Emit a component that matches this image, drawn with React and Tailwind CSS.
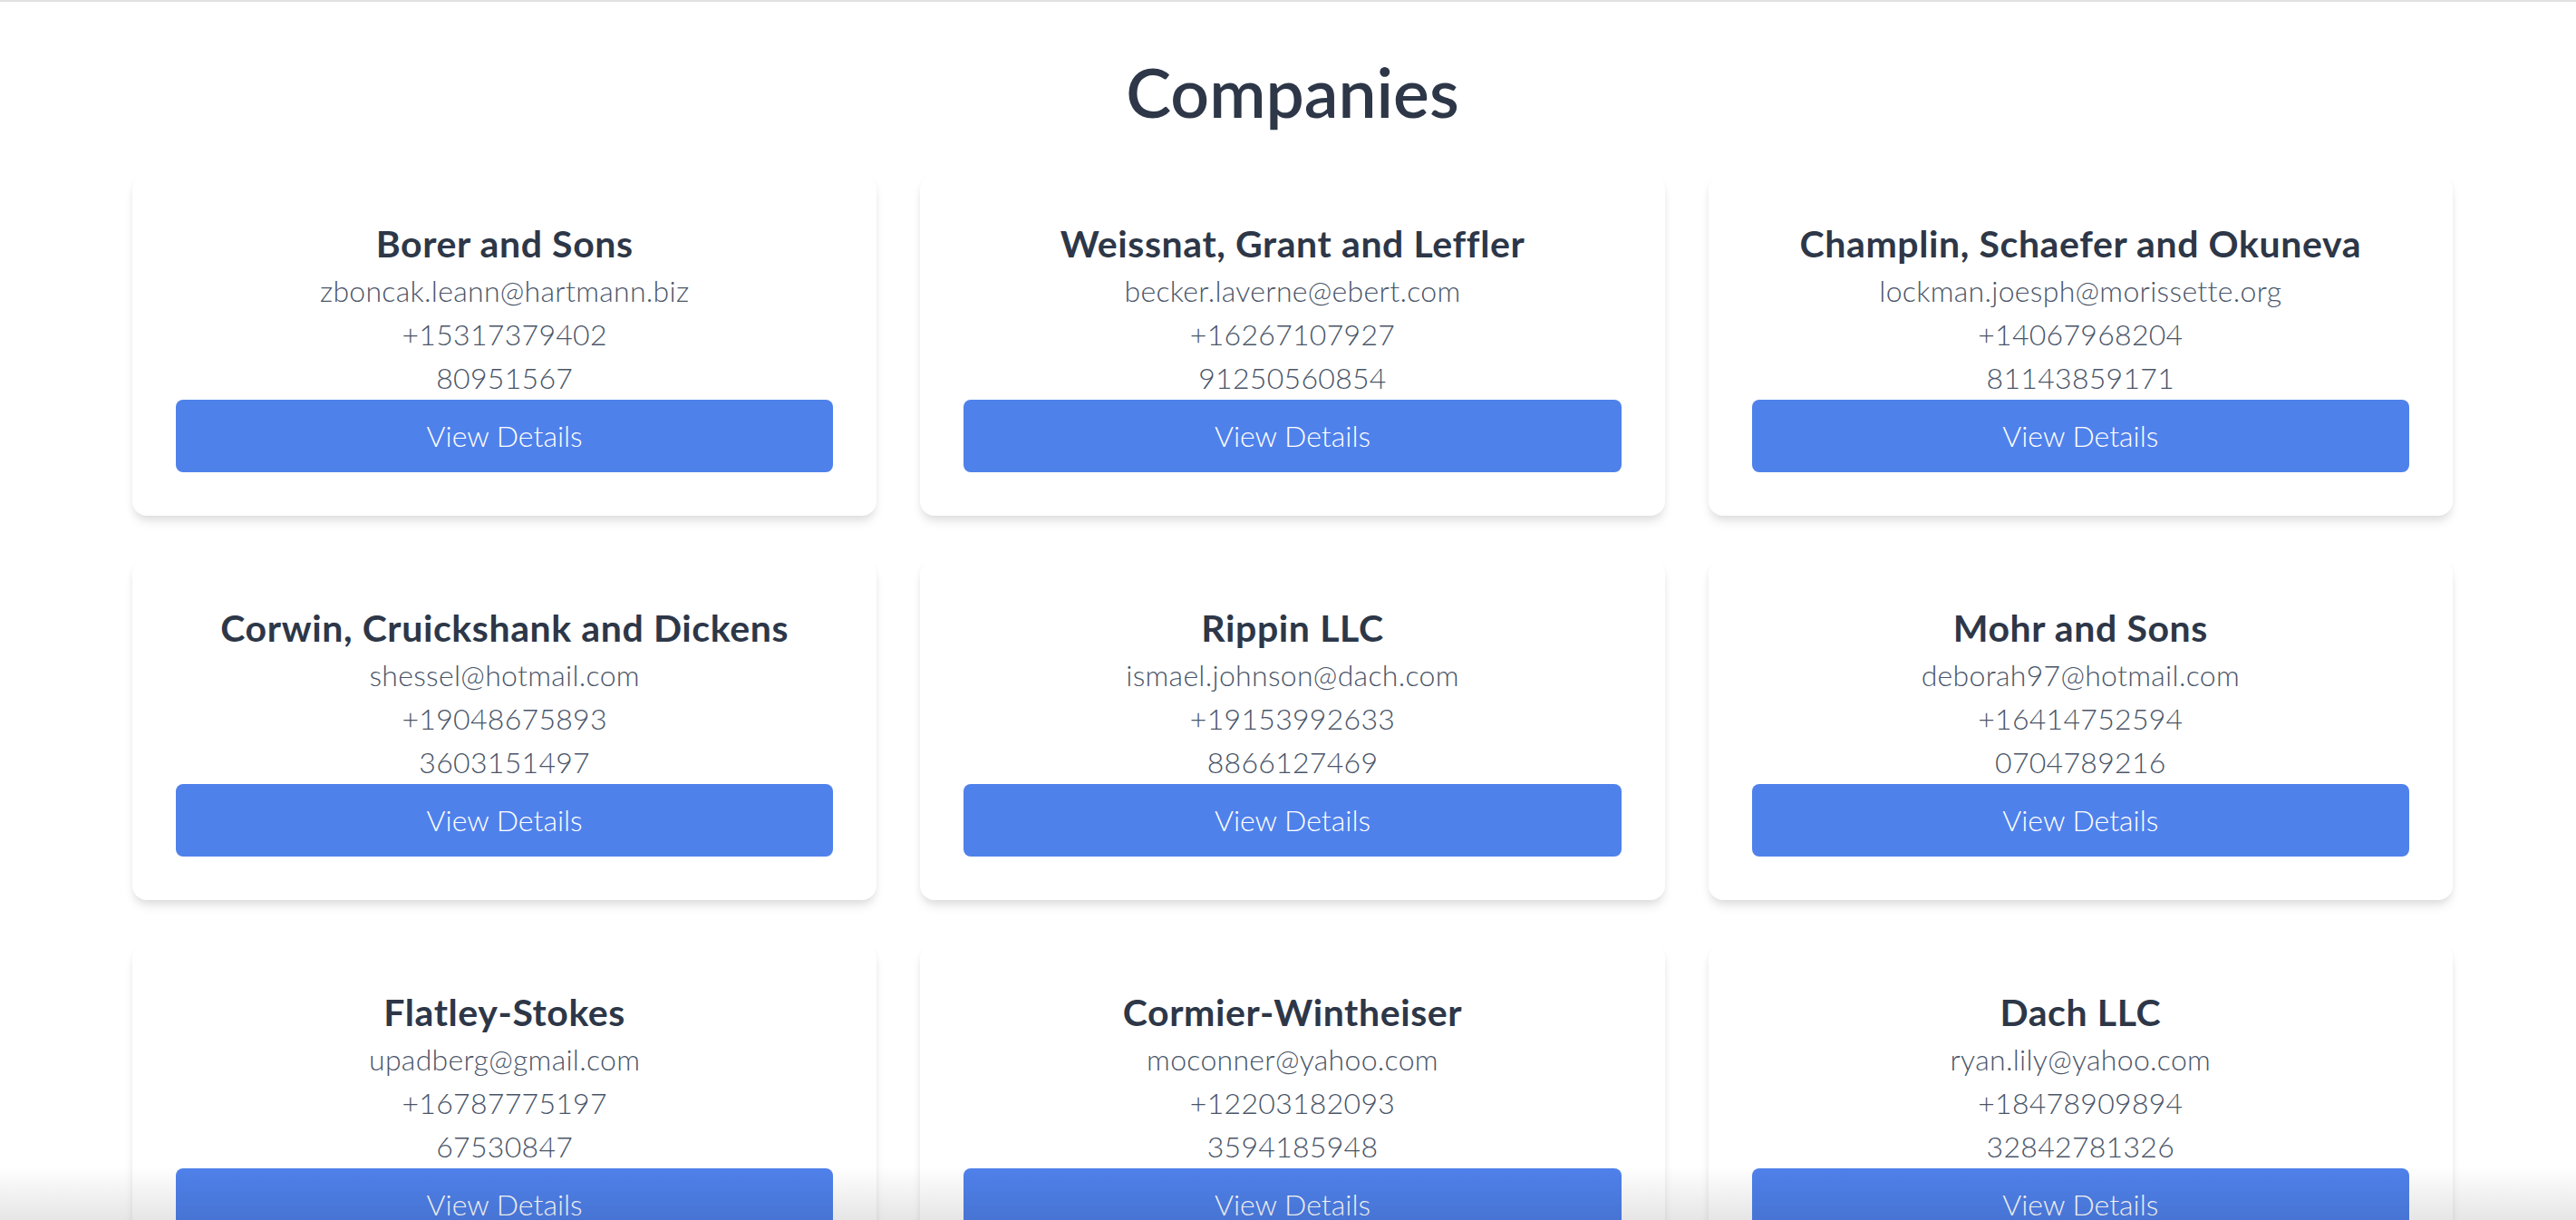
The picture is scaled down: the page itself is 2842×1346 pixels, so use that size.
import React from "react";

const companies = [
  { name: "Borer and Sons", email: "zboncak.leann@hartmann.biz", phone: "+15317379402", id: "80951567" },
  { name: "Weissnat, Grant and Leffler", email: "becker.laverne@ebert.com", phone: "+16267107927", id: "91250560854" },
  { name: "Champlin, Schaefer and Okuneva", email: "lockman.joesph@morissette.org", phone: "+14067968204", id: "81143859171" },
  { name: "Corwin, Cruickshank and Dickens", email: "shessel@hotmail.com", phone: "+19048675893", id: "3603151497" },
  { name: "Rippin LLC", email: "ismael.johnson@dach.com", phone: "+19153992633", id: "8866127469" },
  { name: "Mohr and Sons", email: "deborah97@hotmail.com", phone: "+16414752594", id: "0704789216" },
  { name: "Flatley-Stokes", email: "upadberg@gmail.com", phone: "+16787775197", id: "67530847" },
  { name: "Cormier-Wintheiser", email: "moconner@yahoo.com", phone: "+12203182093", id: "3594185948" },
  { name: "Dach LLC", email: "ryan.lily@yahoo.com", phone: "+18478909894", id: "32842781326" },
];

function CompanyCard({ company }) {
  return (
    <div className="bg-white rounded-2xl p-[48px] text-center shadow-[0_8px_12px_-2px_rgba(0,0,0,0.1),0_4px_8px_-2px_rgba(0,0,0,0.06)]">
      <h2 className="text-[41px] leading-[56px] font-bold tracking-[0.6px] text-[#2d3748]">{company.name}</h2>
      <p className="text-[32px] leading-[48px] font-light tracking-[0.3px] text-[#4a5568]">{company.email}</p>
      <p className="text-[32px] leading-[48px] font-light tracking-[0.3px] text-[#4a5568]">{company.phone}</p>
      <p className="text-[32px] leading-[48px] font-light tracking-[0.3px] text-[#4a5568]">{company.id}</p>
      <button className="w-full bg-[#4f81eb] text-white text-[32px] leading-[48px] font-light py-[16px] rounded-lg">
        View Details
      </button>
    </div>
  );
}

export default function App() {
  return (
    <div className="relative h-[1346px] overflow-hidden bg-white border-t-2 border-[#e2e2e2] font-['Lato',sans-serif]">
      <div className="pl-[10px]">
        <h1 className="pt-[54px] mb-[47px] text-center text-[75px] leading-[90px] font-semibold text-[#2d3748]">
          Companies
        </h1>
        <div className="w-[2560px] mx-auto grid grid-cols-3 gap-[48px]">
          {companies.map((c) => (
            <CompanyCard key={c.name} company={c} />
          ))}
        </div>
      </div>
      <div className="pointer-events-none absolute inset-x-0 bottom-0 h-[60px] bg-gradient-to-t from-black/10 to-transparent" />
    </div>
  );
}
